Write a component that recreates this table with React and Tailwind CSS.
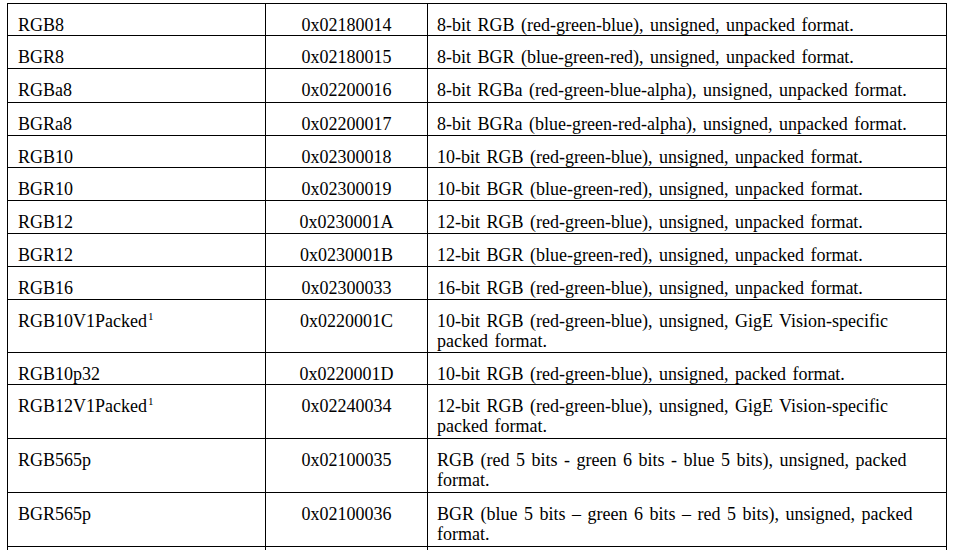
import React from "react";

const rows = [
  { name: "RGB8", code: "0x02180014", desc: ["8-bit RGB (red-green-blue), unsigned, unpacked format."], h: "h-[32px]" },
  { name: "BGR8", code: "0x02180015", desc: ["8-bit BGR (blue-green-red), unsigned, unpacked format."], h: "h-[33px]" },
  { name: "RGBa8", code: "0x02200016", desc: ["8-bit RGBa (red-green-blue-alpha), unsigned, unpacked format."], h: "h-[34px]" },
  { name: "BGRa8", code: "0x02200017", desc: ["8-bit BGRa (blue-green-red-alpha), unsigned, unpacked format."], h: "h-[33px]" },
  { name: "RGB10", code: "0x02300018", desc: ["10-bit RGB (red-green-blue), unsigned, unpacked format."], h: "h-[32px]" },
  { name: "BGR10", code: "0x02300019", desc: ["10-bit BGR (blue-green-red), unsigned, unpacked format."], h: "h-[33px]" },
  { name: "RGB12", code: "0x0230001A", desc: ["12-bit RGB (red-green-blue), unsigned, unpacked format."], h: "h-[33px]" },
  { name: "BGR12", code: "0x0230001B", desc: ["12-bit BGR (blue-green-red), unsigned, unpacked format."], h: "h-[33px]" },
  { name: "RGB16", code: "0x02300033", desc: ["16-bit RGB (red-green-blue), unsigned, unpacked format."], h: "h-[33px]" },
  { name: "RGB10V1Packed", sup: true, code: "0x0220001C", desc: ["10-bit RGB (red-green-blue), unsigned, GigE Vision-specific", "packed format."], h: "h-[53px]" },
  { name: "RGB10p32", code: "0x0220001D", desc: ["10-bit RGB (red-green-blue), unsigned, packed format."], h: "h-[32px]" },
  { name: "RGB12V1Packed", sup: true, code: "0x02240034", desc: ["12-bit RGB (red-green-blue), unsigned, GigE Vision-specific", "packed format."], h: "h-[54px]" },
  { name: "RGB565p", code: "0x02100035", desc: ["RGB (red 5 bits - green 6 bits - blue 5 bits), unsigned, packed", "format."], h: "h-[54px]" },
  { name: "BGR565p", code: "0x02100036", desc: ["BGR (blue 5 bits \u2013 green 6 bits \u2013 red 5 bits), unsigned, packed", "format."], h: "h-[54px]" },
];

const cell = "border border-black align-top pt-[11px] pb-0 leading-[20px] whitespace-nowrap";

export default function App() {
  return (
    <div className="w-[955px] h-[550px] overflow-hidden bg-white pl-[7px] pt-[3px] font-['Liberation_Serif','Times_New_Roman',serif] text-[18px] text-black">
      <table className="border-collapse table-fixed w-[939px]">
        <colgroup>
          <col className="w-[258px]" />
          <col className="w-[162px]" />
          <col className="w-[519px]" />
        </colgroup>
        <tbody>
          {rows.map((r) => (
            <tr key={r.name} className={r.h}>
              <td className={`${cell} pl-[10px]`}>
                {r.name}
                {r.sup && <span className="relative -top-[7px] ml-[1px] text-[11px] leading-none">1</span>}
              </td>
              <td className={`${cell} text-center`}>{r.code}</td>
              <td className={`${cell} pl-[9px] [word-spacing:2px]`}>
                {r.desc.map((line, i) => (
                  <div key={i}>{line}</div>
                ))}
              </td>
            </tr>
          ))}
          <tr className="h-[40px]">
            <td className={cell}></td>
            <td className={cell}></td>
            <td className={cell}></td>
          </tr>
        </tbody>
      </table>
    </div>
  );
}
